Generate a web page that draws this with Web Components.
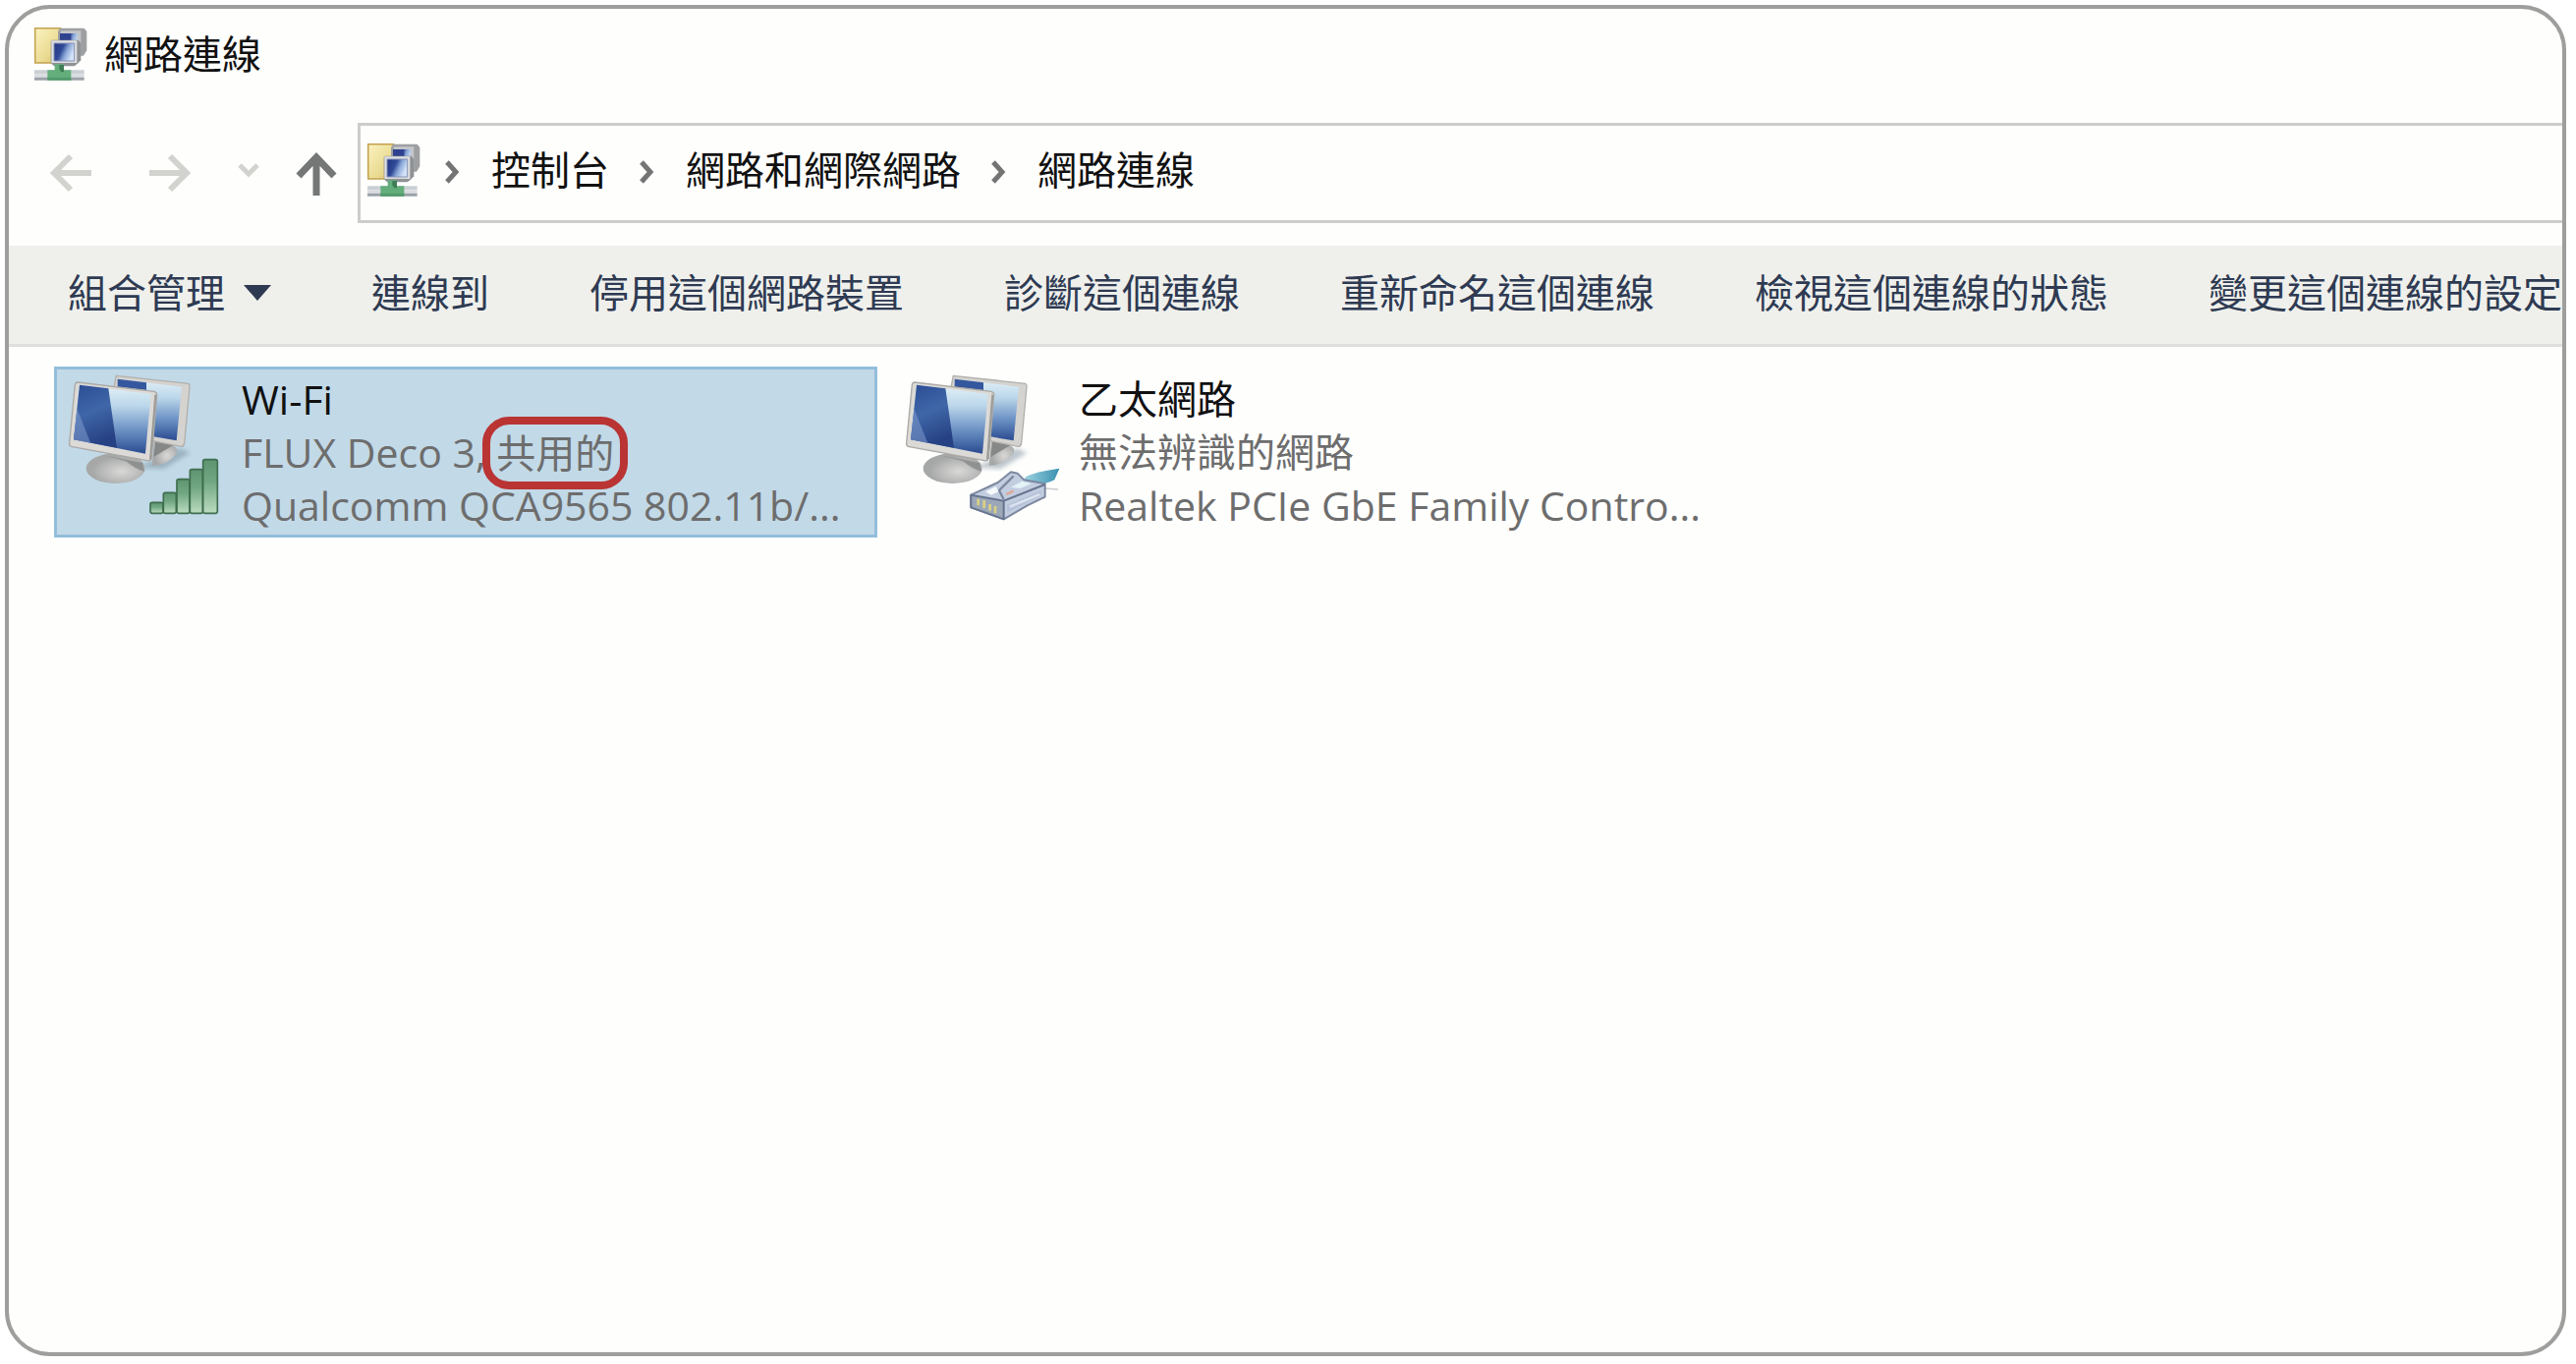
<!DOCTYPE html>
<html lang="zh-Hant">

	<head>
		<meta charset="UTF-8">
		<meta name="viewport" content="width=device-width, initial-scale=1.0">
		<title>網路連線</title>
		<style>
			html {
				height: 100%;
			}
			body {
				box-sizing: border-box;
				height: 100%;
				margin: 0;
				padding: 5px 10px 8px 5px;
				background: #fff;
				color: #111;
				font-family: "Open Sans", "Noto Sans CJK TC", sans-serif;
				font-size: 40px;
				line-height: 54px;
			}
			.latin {
				font-size: 41px;
			}
		</style>
	</head>

	<body>
		<explorer-window>
			<network-icon slot="icon"></network-icon>
			<span slot="title">網路連線</span>
			<address-bar slot="address">
				<network-icon slot="icon"></network-icon>
				<path-crumb>控制台</path-crumb>
				<path-crumb>網路和網際網路</path-crumb>
				<path-crumb>網路連線</path-crumb>
			</address-bar>
			<command-bar slot="commands">
				<command-button menu>組合管理</command-button>
				<command-button>連線到</command-button>
				<command-button>停用這個網路裝置</command-button>
				<command-button>診斷這個連線</command-button>
				<command-button>重新命名這個連線</command-button>
				<command-button>檢視這個連線的狀態</command-button>
				<command-button>變更這個連線的設定</command-button>
			</command-bar>
			<connection-tile kind="wifi" selected>
				<span slot="name" class="latin">Wi-Fi</span>
				<span slot="status" class="latin">FLUX Deco 3, <call-out>共用的</call-out></span>
				<span slot="device" class="latin">Qualcomm QCA9565 802.11b/...</span>
			</connection-tile>
			<connection-tile kind="ethernet">
				<span slot="name">乙太網路</span>
				<span slot="status">無法辨識的網路</span>
				<span slot="device" class="latin">Realtek PCIe GbE Family Contro...</span>
			</connection-tile>
		</explorer-window>

		<template id="explorer-window">
			<style>
				:host {
					display: flex;
					flex-direction: column;
					box-sizing: border-box;
					height: 100%;
					overflow: hidden;
					border: 4px solid #9e9e9c;
					border-radius: 46px;
					background: #fefefd;
				}
				header {
					display: flex;
					align-items: center;
					gap: 17px;
					height: 92px;
					padding: 0 26px;
				}
				nav {
					display: flex;
					align-items: center;
					height: 102px;
					margin: 24px 0 23px;
				}
				nav button {
					display: flex;
					align-items: center;
					justify-content: center;
					height: 60px;
					padding: 0;
					border: 0;
					background: none;
					color: #747776;
				}
				nav button:disabled {
					color: #d2d3cf;
				}
				.step {
					width: 101px;
				}
				.step:first-child {
					margin-left: 12px;
				}
				.recent {
					width: 59px;
				}
				.up {
					width: 79px;
				}
				::slotted(address-bar) {
					flex: 1;
				}
				nav ::slotted(address-bar) {
					margin-left: 3px;
				}
				svg {
					fill: none;
					stroke: currentColor;
				}
				main {
					display: flex;
					flex-wrap: wrap;
					gap: 14px;
					padding: 20px 46px;
				}
			</style>
			<header>
				<slot name="icon"></slot>
				<slot name="title"></slot>
			</header>
			<nav>
				<button class="step" disabled aria-label="上一頁">
					<svg width="44" height="40" stroke-width="6"><path d="M43 20H5M22 3L5 20L22 37" /></svg>
				</button>
				<button class="step" disabled aria-label="下一頁">
					<svg width="44" height="40" stroke-width="6"><path d="M1 20H39M22 3L39 20L22 37" /></svg>
				</button>
				<button class="recent" disabled aria-label="最近的位置">
					<svg width="24" height="24" stroke-width="5"><path d="M3 4L12 13L21 4" /></svg>
				</button>
				<button class="up" aria-label="上一層">
					<svg width="42" height="46" stroke-width="7"><path d="M21 46V7M3 26L21 7L39 26" /></svg>
				</button>
				<slot name="address"></slot>
			</nav>
			<slot name="commands"></slot>
			<main><slot></slot></main>
		</template>

		<template id="address-bar">
			<style>
				:host {
					display: flex;
					align-items: center;
					box-sizing: border-box;
					height: 102px;
					padding-left: 7px;
					padding-bottom: 6px;
					border: 3px solid #cdcdcc;
					border-right: 0;
				}
			</style>
			<slot name="icon"></slot>
			<slot></slot>
		</template>

		<template id="path-crumb">
			<style>
				:host {
					display: flex;
					align-items: center;
				}
				:host(:first-of-type) {
					margin-left: -6px;
				}
				svg {
					width: 18px;
					height: 26px;
					margin: 3px 31px 0 29px;
					fill: none;
					stroke: #747474;
					stroke-width: 5;
				}
				a {
					color: #111;
					text-decoration: none;
				}
			</style>
			<svg viewBox="0 0 18 26"><path d="M4 3L13 13L4 23" /></svg>
			<a href="#"><slot></slot></a>
		</template>

		<template id="command-bar">
			<style>
				:host {
					display: flex;
					align-items: center;
					gap: 102px;
					box-sizing: border-box;
					height: 103px;
					padding: 0 60px 4px;
					border-bottom: 3px solid #dfdfde;
					background: #eff0ec;
				}
			</style>
			<slot></slot>
		</template>

		<template id="command-button">
			<style>
				:host {
					display: block;
					flex: none;
				}
				button {
					display: flex;
					align-items: center;
					gap: 19px;
					padding: 0;
					border: 0;
					background: none;
					color: #2e3a52;
					font: inherit;
					white-space: nowrap;
				}
				svg {
					display: none;
					width: 28px;
					height: 16px;
					fill: #2e3a52;
				}
				:host([menu]) svg {
					display: block;
				}
			</style>
			<button>
				<slot></slot>
				<svg viewBox="0 0 28 16"><path d="M0 0H28L14 16Z" /></svg>
			</button>
		</template>

		<template id="call-out">
			<style>
				:host {
					position: relative;
					display: inline-block;
					font-size: 40px;
				}
				i {
					position: absolute;
					inset: -10px -14px;
					border: 8px solid #b93433;
					border-radius: 27px;
				}
			</style>
			<slot></slot><i></i>
		</template>

		<template id="network-icon">
			<style>
				:host {
					display: block;
					flex: none;
				}
				svg {
					display: block;
				}
			</style>
			<svg width="54" height="54" viewBox="0 0 162 162">
				<defs>
					<linearGradient id="folder" x2="1" y2="1">
						<stop offset="0" stop-color="#fbf3c0" />
						<stop offset=".6" stop-color="#eadb92" />
						<stop offset="1" stop-color="#dcb861" />
					</linearGradient>
					<linearGradient id="glass" x2="1" y2=".4">
						<stop offset="0" stop-color="#23347f" />
						<stop offset=".45" stop-color="#304a98" />
						<stop offset=".7" stop-color="#8ba8d9" />
						<stop offset="1" stop-color="#d3e2f6" />
					</linearGradient>
				</defs>
				<path d="M2 2H78L92 12V108H2Z" fill="url(#folder)" stroke="#c3a24e" stroke-width="5" />
				<path d="M78 2H152L160 12V70L150 86H140L134 100H72V12Z" fill="#9d9fa1" />
				<path d="M80 10H142V82H80Z" fill="#c3c5c8" />
				<path d="M84 18H132V74H84Z" fill="url(#glass)" />
				<path d="M78 18H112V40H78Z" fill="#2f4290" />
				<path d="M54 38H134L142 48V100L132 110L122 118H60L50 108V42Z" fill="#8f9294" />
				<path d="M52 40H130V108H52Z" fill="#dddee0" />
				<path d="M60 48H122V102H60Z" fill="url(#glass)" stroke="#8492b8" stroke-width="3" />
				<path d="M0 130H152V142H0Z" fill="#cbd0d4" />
				<path d="M0 142H152V152H0Z" fill="#d9dcdf" />
				<path d="M0 152H152V161H0Z" fill="#9ba2a8" />
				<path d="M62 112H90V130H112V161H40V130H62Z" fill="#64ae7c" />
				<path d="M76 114H90V136H80V130H76Z" fill="#3e7c55" />
				<path d="M40 152H112V161H40Z" fill="#539b6d" />
			</svg>
		</template>

		<template id="connection-tile">
			<style>
				:host {
					display: block;
					width: 838px;
				}
				button {
					display: flex;
					gap: 18px;
					box-sizing: border-box;
					width: 100%;
					height: 174px;
					padding: 3px 10px;
					border: 3px solid transparent;
					background: none;
					color: #6d6d6d;
					font: inherit;
					text-align: left;
				}
				:host([selected]) button {
					border-color: #93bedb;
					background: #c2d9e7;
				}
				svg {
					flex: none;
				}
				.text {
					flex: 1;
					min-width: 0;
				}
				.text div {
					height: 54px;
					white-space: nowrap;
				}
				.name {
					color: #111;
				}
				.badge {
					display: none;
				}
				:host([kind="wifi"]) .signal,
				:host([kind="ethernet"]) .plug {
					display: inline;
				}
			</style>
			<button>
				<svg width="160" height="160" viewBox="85 60 480 480">
					<defs>
						<linearGradient id="dark" x1="0" y1="0" x2=".3" y2="1">
							<stop offset="0" stop-color="#2c4c94" />
							<stop offset=".5" stop-color="#3f67a8" />
							<stop offset="1" stop-color="#274284" />
						</linearGradient>
						<linearGradient id="light" x2="0" y2="1">
							<stop offset="0" stop-color="#e2f1f8" />
							<stop offset=".3" stop-color="#bcd7ea" />
							<stop offset=".65" stop-color="#6d93c5" />
							<stop offset="1" stop-color="#2a4b91" />
						</linearGradient>
						<radialGradient id="foot" cx=".6" cy=".6">
							<stop offset="0" stop-color="#dad9d7" />
							<stop offset="1" stop-color="#a6a8a8" />
						</radialGradient>
						<linearGradient id="bar" x2="0" y2="1">
							<stop offset="0" stop-color="#5e9470" />
							<stop offset=".4" stop-color="#70a681" />
							<stop offset="1" stop-color="#bbdcc0" />
						</linearGradient>
						<linearGradient id="cable" x2="1">
							<stop offset="0" stop-color="#a9dbe6" />
							<stop offset="1" stop-color="#398fb0" />
						</linearGradient>
						<filter id="soft"><feGaussianBlur stdDeviation="7" /></filter>
					</defs>
					<path d="M300 350L380 355L462 305L430 292Z" fill="#6f8594" opacity=".45" filter="url(#soft)" />
					<path d="M352 268L405 280Q430 292 418 310Q395 342 345 345Z" fill="url(#foot)" />
					<path d="M356 272L410 282L350 318Z" fill="#858887" />
					<path d="M236 70L456 94Q461 96 460 104L444 276Q442 286 434 286L345 268L228 110Z" fill="#d5d3cf" stroke="#b1b0ac" stroke-width="4" />
					<path d="M240 80L436 104L420 268L350 256V124L240 106Z" fill="url(#light)" />
					<path d="M240 80L328 91V114L240 104Z" fill="#34579d" />
					<ellipse cx="234" cy="353" rx="90" ry="46" fill="url(#foot)" />
					<path d="M172 308L316 336L322 362Q290 352 268 332Q225 318 172 308Z" fill="#858887" opacity=".8" />
					<path d="M118 90L352 118Q361 121 360 130L344 322Q340 332 330 329L98 286Q91 282 93 275L110 98Q112 90 118 90Z" fill="#dcdad6" stroke="#aaa9a6" stroke-width="4" />
					<path d="M356 128L340 326" stroke="#9c9b98" stroke-width="6" />
					<path d="M124 98L342 126L325 308L106 265Z" fill="url(#light)" />
					<path d="M124 98L212 109L238 290L106 265Z" fill="url(#dark)" />
					<path d="M116 170L158 276L106 265Z" fill="#7f9bcd" opacity=".55" />
					<g class="badge signal" fill="url(#bar)" stroke="#3f6e4f" stroke-width="5">
						<rect x="340" y="457" width="39" height="33" rx="6" />
						<rect x="380" y="427" width="39" height="63" rx="6" />
						<rect x="421" y="386" width="39" height="104" rx="6" />
						<rect x="461" y="356" width="39" height="134" rx="6" />
						<rect x="501" y="326" width="44" height="164" rx="6" />
					</g>
					<g class="badge plug" stroke-linejoin="round">
						<path d="M440 400L458 378Q490 362 560 353L545 388Q515 404 480 402Z" fill="url(#cable)" />
						<path d="M515 414L556 417" stroke="#c9cccf" stroke-width="5" />
						<path d="M290 434L372 396L412 364L432 368L452 388L516 400V440L462 466L390 508L290 472Z" fill="#c3cde0" stroke="#7c889f" stroke-width="6" />
						<path d="M290 434L390 452V508L290 472Z" fill="#9ca7b8" stroke="#66748e" stroke-width="6" />
						<path d="M390 452L516 402" stroke="#66748e" stroke-width="6" />
						<path d="M390 448L376 420L420 376" fill="none" stroke="#7c889f" stroke-width="7" />
						<path d="M334 424L366 408L374 424L352 434Z" fill="#f7fafc" />
						<path d="M412 410L446 392L474 400L440 414Z" fill="#e3f3f6" />
						<path d="M400 464L504 420V436L400 488Z" fill="#b6c3da" />
						<path d="M408 470L500 432" stroke="#dde4f0" stroke-width="7" />
						<path d="M312 446V466M330 450V474M348 462V482M364 468V490" stroke="#d8d184" stroke-width="8" />
						<path d="M398 432L420 422" stroke="#dfa895" stroke-width="7" />
					</g>
				</svg>
				<div class="text">
					<div class="name"><slot name="name"></slot></div>
					<div><slot name="status"></slot></div>
					<div><slot name="device"></slot></div>
				</div>
			</button>
		</template>
	</body>
	<script>

		class TemplateElement extends HTMLElement {
			constructor() {
				super()
				const template = document.getElementById(this.localName);
				const content = template.content.cloneNode(true);
				this.attachShadow({ mode: 'open' }).appendChild(content);
			}
		}

		class NetworkIcon extends TemplateElement {}
		class PathCrumb extends TemplateElement {}
		class AddressBar extends TemplateElement {}
		class CommandButton extends TemplateElement {}
		class CommandBar extends TemplateElement {}
		class CallOut extends TemplateElement {}

		class ConnectionTile extends TemplateElement {
			connectedCallback() {
				const button = this.shadowRoot.querySelector('button');
				button.addEventListener('click', () => {
					this.dispatchEvent(new CustomEvent('pick', { bubbles: true }))
				})
			}
		}

		class ExplorerWindow extends TemplateElement {
			connectedCallback() {
				// only one connection is selected at a time
				this.addEventListener('pick', (evt) => {
					this.querySelectorAll('connection-tile').forEach((tile) => {
						tile.toggleAttribute('selected', tile === evt.target)
					})
				})
			}
		}

		window.customElements.define('network-icon', NetworkIcon)
		window.customElements.define('path-crumb', PathCrumb)
		window.customElements.define('address-bar', AddressBar)
		window.customElements.define('command-button', CommandButton)
		window.customElements.define('command-bar', CommandBar)
		window.customElements.define('call-out', CallOut)
		window.customElements.define('connection-tile', ConnectionTile)
		window.customElements.define('explorer-window', ExplorerWindow)
	</script>

</html>
